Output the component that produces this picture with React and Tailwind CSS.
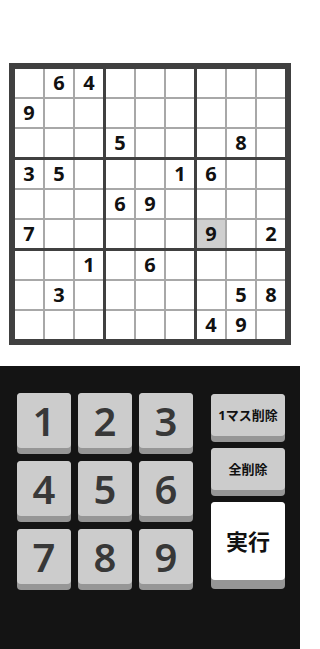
import React from 'react';

const PUZZLE = [
  [0, 6, 4, 0, 0, 0, 0, 0, 0],
  [9, 0, 0, 0, 0, 0, 0, 0, 0],
  [0, 0, 0, 5, 0, 0, 0, 8, 0],
  [3, 5, 0, 0, 0, 1, 6, 0, 0],
  [0, 0, 0, 6, 9, 0, 0, 0, 0],
  [7, 0, 0, 0, 0, 0, 9, 0, 2],
  [0, 0, 1, 0, 6, 0, 0, 0, 0],
  [0, 3, 0, 0, 0, 0, 0, 5, 8],
  [0, 0, 0, 0, 0, 0, 4, 9, 0],
];

// selected cell (row, col)
const SELECTED = [5, 6];

const Board = () => {
  const boxes = [];
  for (let br = 0; br < 3; br++) {
    for (let bc = 0; bc < 3; bc++) {
      const cells = [];
      for (let r = 0; r < 3; r++) {
        for (let c = 0; c < 3; c++) {
          const row = br * 3 + r;
          const col = bc * 3 + c;
          const v = PUZZLE[row][col];
          const sel = row === SELECTED[0] && col === SELECTED[1];
          cells.push(
            <div
              key={`${row}-${col}`}
              className={`w-[28px] h-[28px] flex items-center justify-center text-[20px] font-bold text-[#111] leading-none ${sel ? 'bg-[#cfcfcf]' : 'bg-white'}`}
            >
              {v || ''}
            </div>
          );
        }
      }
      boxes.push(
        <div key={`${br}-${bc}`} className="grid grid-cols-3 gap-[2px] bg-[#a8a8a8]">
          {cells}
        </div>
      );
    }
  }
  return (
    <div className="ml-[9px] w-[282px] p-[6px] bg-[#404040] grid grid-cols-3 gap-[3px]">
      {boxes}
    </div>
  );
};

const NumKey = ({ n }) => (
  <button className="w-[54px] h-[61px] rounded-[4px] bg-[#969696] pb-[6px] flex">
    <span className="flex-1 rounded-[4px] bg-[#cccccc] flex items-center justify-center text-[40px] font-semibold text-[#383838] leading-none">
      {n}
    </span>
  </button>
);

const SideKey = ({ label, h, shadow = 'pb-[6px]', face = 'bg-[#cccccc]', size = 'text-[13px]' }) => (
  <button className={`w-[74px] ${h} ${shadow} rounded-[4px] bg-[#969696] flex`}>
    <span className={`flex-1 rounded-[4px] ${face} flex items-center justify-center ${size} font-bold text-[#111] leading-none`}>
      {label}
    </span>
  </button>
);

export default function App() {
  return (
    <div
      className="w-[300px] h-[649px] flex flex-col bg-white overflow-hidden"
      style={{ fontFamily: '"Noto Sans", "Noto Sans CJK JP", sans-serif' }}
    >
      <div className="h-[63px]" />
      <Board />
      <div className="h-[21px]" />

      <div className="flex-1 bg-[#141414] pt-[27px] pl-[17px] flex gap-[18px] items-start">
        <div className="grid grid-cols-3 gap-[7px]">
          {[1, 2, 3, 4, 5, 6, 7, 8, 9].map((n) => (
            <NumKey key={n} n={n} />
          ))}
        </div>
        <div className="flex flex-col gap-[6px] pt-[1px]">
          <SideKey label="1マス削除" h="h-[48px]" />
          <SideKey label="全削除" h="h-[48px]" />
          <SideKey label="実行" h="h-[87px]" shadow="pb-[9px]" face="bg-white" size="text-[22px]" />
        </div>
      </div>
    </div>
  );
}
